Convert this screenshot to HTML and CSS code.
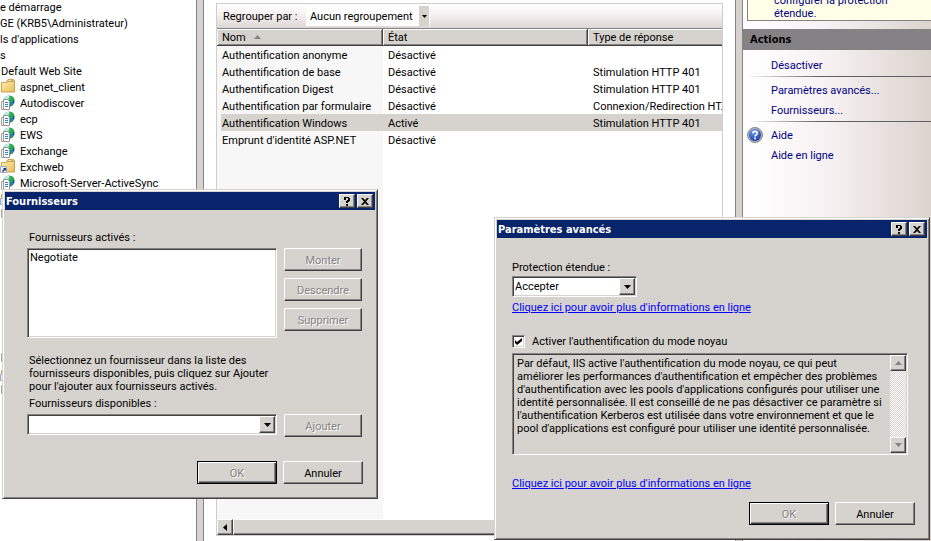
FILE: index.html
```html
<!DOCTYPE html>
<html lang="fr">
<head>
<meta charset="utf-8">
<title>Authentification</title>
<link rel="stylesheet" href="styles.css">
</head>
<body>
<svg class="defs" aria-hidden="true">
  <defs>
    <linearGradient id="gFolder" x1="0" y1="0" x2="1" y2="1"><stop offset="0" stop-color="#fff0b0"/><stop offset="1" stop-color="#e8bc58"/></linearGradient>
    <radialGradient id="gGlobe" cx=".35" cy=".3" r=".8"><stop offset="0" stop-color="#9fe0ff"/><stop offset=".5" stop-color="#2a86e0"/><stop offset="1" stop-color="#0a3a9c"/></radialGradient>
    <radialGradient id="gHelp" cx=".4" cy=".25" r=".8"><stop offset="0" stop-color="#6f9cf0"/><stop offset="1" stop-color="#1438a8"/></radialGradient>
  </defs>
  <symbol id="folder" viewBox="0 0 16 16">
    <path d="M7 1.500 8 .5h5.500l1 1V12H6z" fill="#e9bd5c" stroke="#c79a3c" stroke-width=".8"/>
    <path d="M8.500 1.500h4v1h-4z" fill="#fff"/><path d="M11 1.500h2v1h-2z" fill="#48a8d8"/>
    <path d="M1.500 3.500h5.500l1-1h6.500v10.500h-13z" fill="url(#gFolder)" stroke="#c99d45" stroke-width=".9"/>
  </symbol>
  <symbol id="app" viewBox="0 0 16 16">
    <circle cx="9" cy="6" r="5.600" fill="url(#gGlobe)"/>
    <path d="M4.500 3C6 1 8.500.5 9.500 1L8.500 3 6.500 4 5 6.500 3.800 5z" fill="#c5efd0"/>
    <path d="M9.500.700c2 0 4 1.500 4.700 3.300L13 5l-1 2.500-2-1L9 4l1.500-1z" fill="#28b428"/>
    <path d="M10.500 8.500 13 8l-1.500 3-1 .5z" fill="#34a843"/>
    <path d="M1.500 6.500h5v8h-5z" fill="#fff" stroke="#999" stroke-width=".9"/>
    <path d="M3.500 4.500h4l2 2v8h-6z" fill="#fff" stroke="#888" stroke-width=".9"/>
    <path d="M5 7.500h3M5 9.500h3M5 11.500h3" stroke="#3b7fd0"/>
  </symbol>
  <symbol id="vdir" viewBox="0 0 16 16">
    <use href="#folder"/>
    <path d="M.5 7.500h6v6h-6z" fill="#eef1fb" stroke="#a0a8c0"/>
    <path d="M3 9h3v3L5 11l-2 2-1-1 2-2z" fill="#203080"/>
  </symbol>
  <symbol id="page" viewBox="0 0 16 16"><path d="M1 2h13v9H1z" fill="#aaa"/></symbol>
</svg>

<main class="console">
  <nav class="tree" aria-label="Connexions">
    <ul>
      <li>e démarrage</li>
      <li>GE (KRB5\Administrateur)</li>
      <li>ls d'applications</li>
      <li>s</li>
      <li class="site">Default Web Site</li>
      <li class="leaf"><svg><use href="#folder"/></svg>aspnet_client</li>
      <li class="leaf"><svg><use href="#app"/></svg>Autodiscover</li>
      <li class="leaf"><svg><use href="#app"/></svg>ecp</li>
      <li class="leaf"><svg><use href="#app"/></svg>EWS</li>
      <li class="leaf"><svg><use href="#app"/></svg>Exchange</li>
      <li class="leaf"><svg><use href="#vdir"/></svg>Exchweb</li>
      <li class="leaf"><svg><use href="#app"/></svg>Microsoft-Server-ActiveSync</li>
      <li class="leaf"><svg><use href="#vdir"/></svg></li>
      <li class="leaf"><svg><use href="#page"/></svg></li>
      <li></li><li></li><li></li><li></li><li></li><li></li><li></li><li></li>
      <li class="leaf"><svg><use href="#page"/></svg></li>
      <li class="leaf"><svg><use href="#vdir"/></svg></li>
      <li class="leaf"><svg><use href="#page"/></svg></li>
    </ul>
  </nav>
  <div class="splitter"></div>

  <section class="center">
    <div class="list">
      <div class="toolbar">
        <label for="group">Regrouper par :</label>
        <span class="flat-combo">
          <select id="group"><option>Aucun regroupement</option></select>
          <span class="arrow"><svg viewBox="0 0 5 3"><path d="M0 0h5L2.500 3z"/></svg></span>
        </span>
      </div>
      <div class="rows">
        <table>
          <colgroup><col class="c-name"><col class="c-state"><col></colgroup>
          <thead><tr>
            <th>Nom <svg class="sort" viewBox="0 0 7 4"><path d="M0 4h7L3.500 0z"/></svg></th>
            <th>État</th><th>Type de réponse</th>
          </tr></thead>
          <tbody>
            <tr><td>Authentification anonyme</td><td>Désactivé</td><td></td></tr>
            <tr><td>Authentification de base</td><td>Désactivé</td><td>Stimulation HTTP 401</td></tr>
            <tr><td>Authentification Digest</td><td>Désactivé</td><td>Stimulation HTTP 401</td></tr>
            <tr><td>Authentification par formulaire</td><td>Désactivé</td><td>Connexion/Redirection HT.</td></tr>
            <tr class="selected"><td>Authentification Windows</td><td>Activé</td><td>Stimulation HTTP 401</td></tr>
            <tr><td>Emprunt d'identité ASP.NET</td><td>Désactivé</td><td></td></tr>
          </tbody>
        </table>
      </div>
      <div class="hscroll">
        <button type="button" aria-label="Défiler à gauche"><svg viewBox="0 0 4 7"><path d="M4 0v7L0 3.500z"/></svg></button>
        <div class="thumb"></div>
      </div>
    </div>
  </section>
  <div class="splitter"></div>

  <aside class="actions">
    <div class="note">configurer la protection étendue.</div>
    <h2>Actions</h2>
    <ul>
      <li><a href="#">Désactiver</a></li>
      <li class="rule"></li>
      <li><a href="#">Paramètres avancés...</a></li>
      <li><a href="#">Fournisseurs...</a></li>
      <li class="rule"></li>
      <li><svg class="help" viewBox="0 0 16 16"><circle cx="8" cy="8" r="7.500" fill="#b4b4b8" stroke="#88888c"/><circle cx="8" cy="8" r="6" fill="url(#gHelp)"/><path d="M5.800 6.200C5.800 3.500 10.500 3.700 10.300 6.200 10.200 7.800 8.100 7.700 8.100 9.500" fill="none" stroke="#fff" stroke-width="1.700"/><path d="M7.200 10.600h1.800v1.700H7.200z" fill="#fff"/></svg><a href="#">Aide</a></li>
      <li><a href="#">Aide en ligne</a></li>
    </ul>
  </aside>
</main>

<section class="dialog providers" role="dialog" aria-labelledby="t1">
  <header>
    <h1 id="t1">Fournisseurs</h1>
    <button type="button" aria-label="Aide"><svg viewBox="0 0 8 9"><path d="M1 0h5v1h1v3H6v1H5v1H3V4h1V3h1V1H3v2H1zM3 7h2v2H3z"/></svg></button>
    <button type="button" aria-label="Fermer"><svg viewBox="0 0 8 9"><path d="M0 1h2l2 2 2-2h2L5 4.500 8 8H6L4 6 2 8H0l3-3.500z"/></svg></button>
  </header>
  <form>
    <label for="active">Fournisseurs activés :</label>
    <div class="pair">
      <select id="active" class="listbox" size="5"><option>Negotiate</option></select>
      <div class="stack">
        <button type="button" disabled>Monter</button>
        <button type="button" disabled>Descendre</button>
        <button type="button" disabled>Supprimer</button>
      </div>
    </div>
    <p>Sélectionnez un fournisseur dans la liste des<br>fournisseurs disponibles, puis cliquez sur Ajouter<br>pour l'ajouter aux fournisseurs activés.</p>
    <label for="avail">Fournisseurs disponibles :</label>
    <div class="pair">
      <span class="combo"><select id="avail"><option></option></select><span class="arrow"><svg viewBox="0 0 7 4"><path d="M0 0h7L3.500 4z"/></svg></span></span>
      <div class="stack"><button type="button" disabled>Ajouter</button></div>
    </div>
    <footer><button type="button" class="default" disabled>OK</button><button type="button">Annuler</button></footer>
  </form>
</section>

<section class="dialog advanced" role="dialog" aria-labelledby="t2">
  <header>
    <h1 id="t2">Paramètres avancés</h1>
    <button type="button" aria-label="Aide"><svg viewBox="0 0 8 9"><path d="M1 0h5v1h1v3H6v1H5v1H3V4h1V3h1V1H3v2H1zM3 7h2v2H3z"/></svg></button>
    <button type="button" aria-label="Fermer"><svg viewBox="0 0 8 9"><path d="M0 1h2l2 2 2-2h2L5 4.500 8 8H6L4 6 2 8H0l3-3.500z"/></svg></button>
  </header>
  <form>
    <label for="prot">Protection étendue :</label>
    <span class="combo short"><select id="prot"><option>Accepter</option></select><span class="arrow"><svg viewBox="0 0 7 4"><path d="M0 0h7L3.500 4z"/></svg></span></span>
    <a class="more" href="#">Cliquez ici pour avoir plus d'informations en ligne</a>
    <div class="check"><input type="checkbox" id="kernel" checked><label for="kernel">Activer l'authentification du mode noyau</label></div>
    <div class="memo">
      <textarea readonly aria-label="Description">Par défaut, IIS active l'authentification du mode noyau, ce qui peut
améliorer les performances d'authentification et empêcher des problèmes
d'authentification avec les pools d'applications configurés pour utiliser une
identité personnalisée. Il est conseillé de ne pas désactiver ce paramètre si
l'authentification Kerberos est utilisée dans votre environnement et que le
pool d'applications est configuré pour utiliser une identité personnalisée.</textarea>
      <div class="vscroll">
        <button type="button" disabled aria-label="Monter"><svg viewBox="0 0 7 4"><path d="M0 4h7L3.500 0z"/></svg></button>
        <button type="button" disabled aria-label="Descendre"><svg viewBox="0 0 7 4"><path d="M0 0h7L3.500 4z"/></svg></button>
      </div>
    </div>
    <a class="more" href="#">Cliquez ici pour avoir plus d'informations en ligne</a>
    <footer><button type="button" class="default" disabled>OK</button><button type="button">Annuler</button></footer>
  </form>
</section>
</body>
</html>
```
FILE: styles.css
```css
:root {
  --face: #d6d3ce;
  --shade: #848284;
  --dark: #424142;
  --navy: #08246b;
}
* { box-sizing: border-box; }
body {
  margin: 0;
  background: #fff;
  color: #000;
  overflow: hidden;
}
body, button, select, input, textarea {
  font: 11px/13px Roboto, "Noto Sans", sans-serif;
}
ul { list-style: none; margin: 0; padding: 0; }
h1, h2, p { margin: 0; font-size: 11px; }
h1, h2 { font-family: "DejaVu Sans Condensed", "Noto Sans", sans-serif; }
svg { display: block; flex: none; }
.defs { position: absolute; width: 0; height: 0; }

.console {
  display: grid;
  grid-template-columns: 196px 8px minmax(0, 1fr) 8px 188px;
  height: 100vh;
}
.splitter {
  background: var(--face);
  border: solid var(--shade);
  border-width: 0 1px;
}

/* Tree */
.tree { overflow: hidden; white-space: nowrap; }
.tree ul { margin-top: -1px; }
.tree li { height: 16px; line-height: 17px; }
.tree .site { padding-left: 1px; }
.tree .leaf { display: flex; gap: 4px; }
.tree svg { width: 16px; height: 16px; }

/* Feature list */
.center { padding: 3px 12px 5px; min-width: 0; }
.list {
  display: flex;
  flex-direction: column;
  height: 100%;
  border: 1px solid #d0cdcc;
}
.toolbar {
  display: flex;
  align-items: center;
  gap: 6px;
  flex: none;
  height: 25px;
  padding-left: 6px;
  border-bottom: 1px solid var(--shade);
  background: linear-gradient(#fff, #f5eff1 45%, #dcd6d3);
}
.toolbar label { width: 77px; white-space: nowrap; }
.flat-combo { position: relative; width: 124px; height: 20px; }
.flat-combo select {
  appearance: none;
  width: 100%;
  height: 100%;
  padding: 0 0 0 4px;
  border: 0;
  border-radius: 0;
  background: #fff;
}
.flat-combo .arrow {
  position: absolute;
  inset: 0 1px 0 auto;
  width: 10px;
  display: grid;
  place-items: center;
  background: var(--face);
  pointer-events: none;
}
.flat-combo svg { width: 5px; height: 3px; }
.rows {
  flex: 1;
  min-height: 0;
  overflow: hidden;
  background: linear-gradient(to right, #f7f7f7 166px, #fff 166px);
}
table { width: 100%; table-layout: fixed; border-collapse: separate; border-spacing: 0; }
.c-name { width: 166px; }
.c-state { width: 205px; }
th, td {
  height: 17px;
  padding: 1px 0 0 5px;
  text-align: left;
  font-weight: normal;
  white-space: nowrap;
  overflow: hidden;
}
th {
  background: var(--face);
  border-right: 1px solid var(--dark);
  border-bottom: 1px solid var(--dark);
  box-shadow: inset 1px 1px #fff, inset -1px -1px var(--shade);
}
th:last-child { border-right: 0; box-shadow: inset 1px 1px #fff, inset 0 -1px var(--shade); }
.sort { display: inline-block; width: 7px; height: 4px; margin: 0 0 2px 5px; fill: var(--shade); }
.selected td { background: var(--face); }
.selected td:first-child { background: linear-gradient(to right, transparent 4px, var(--face) 4px); }
.hscroll { display: flex; height: 16px; flex: none; }
.hscroll button, .hscroll .thumb, .vscroll button, .combo .arrow, .dialog header button {
  display: grid;
  place-items: center;
  padding: 0;
  border: 1px solid;
  border-color: #fff var(--dark) var(--dark) #fff;
  box-shadow: inset -1px -1px var(--shade);
  background: var(--face);
}
.hscroll button { width: 16px; }
.hscroll svg { width: 4px; height: 7px; }
.hscroll .thumb { flex: 1; }

/* Actions */
.actions {
  overflow: hidden;
  background: linear-gradient(to right, #fff, #f7f1f3 45%, #dbd4ce);
}
.note {
  display: flex;
  align-items: flex-end;
  height: 21px;
  margin-left: 4px;
  padding: 0 24px 0 26px;
  border: solid var(--shade);
  border-width: 0 0 1px 1px;
  background: #ffffe7;
  color: #000084;
}
.actions h2 {
  height: 21px;
  margin-top: 8px;
  padding-left: 7px;
  line-height: 22px;
  background: var(--shade);
}
.actions ul { padding: 5px 0 0 4px; }
.actions li { display: flex; align-items: center; height: 20px; padding-left: 24px; }
.actions .rule {
  height: 1px;
  margin: 1px 0 3px;
  padding: 0;
  background: linear-gradient(to right, transparent, #636163 40%);
}
.actions a { color: #000084; text-decoration: none; }
.help { width: 16px; height: 16px; margin: 0 8px 0 -24px; }

/* Dialogs */
.dialog {
  position: absolute;
  padding: 2px;
  border: 1px solid;
  border-color: var(--face) var(--dark) var(--dark) var(--face);
  box-shadow: inset 1px 1px #fff, inset -1px -1px var(--shade);
  background: var(--face);
}
.providers { left: 2px; top: 189px; width: 376px; }
.advanced { left: 494px; top: 217px; width: 436px; }
.dialog header {
  display: flex;
  align-items: center;
  gap: 2px;
  height: 18px;
  padding: 0 2px 0 1px;
  background: var(--navy);
  color: #fff;
}
.dialog h1 { flex: 1; }
.dialog header button { width: 16px; height: 14px; }
.dialog header svg { width: 8px; height: 9px; }
.dialog form { display: flex; flex-direction: column; }
.providers form { padding: 21px 12px 12px 22px; }
.advanced form { padding: 23px 12px 12px 15px; }
.providers form > label, .providers p { padding-left: 2px; }
.pair { display: flex; gap: 7px; }
.providers label + .pair { margin-top: 4px; }
.stack { display: flex; flex-direction: column; gap: 7px; width: 78px; }
.stack button, footer button {
  height: 23px;
  padding: 1px 0 0;
  border: 1px solid;
  border-color: #fff var(--dark) var(--dark) #fff;
  box-shadow: inset -1px -1px var(--shade);
  background: var(--face);
  color: #000;
}
.dialog button:disabled { color: var(--shade); text-shadow: 1px 1px #fff; }
footer { display: flex; justify-content: flex-end; gap: 6px; }
footer button { width: 80px; }
footer .default {
  border-color: #000;
  box-shadow: inset 1px 1px #fff, inset -1px -1px var(--dark), inset -2px -2px var(--shade);
}
.listbox, .combo, .memo {
  border: 1px solid;
  border-color: var(--shade) #fff #fff var(--shade);
  box-shadow: inset 1px 1px var(--dark), inset -1px -1px var(--face);
  border-radius: 0;
}
.listbox {
  appearance: none;
  width: 250px;
  height: 90px;
  padding: 2px 1px;
  overflow: hidden;
  background: #fff;
  outline: 0;
}
.listbox option { min-height: 0; padding: 0 1px; }
.providers p { margin: 16px 0 4px; }
.combo {
  position: relative;
  width: 250px;
  height: 21px;
  padding: 1px;
  background: #fff;
}
.combo select {
  display: block;
  appearance: none;
  width: 100%;
  height: 100%;
  padding: 0 0 0 1px;
  border: 0;
  background: transparent;
}
.combo .arrow {
  position: absolute;
  inset: 1px 1px 1px auto;
  width: 16px;
  pointer-events: none;
}
.combo svg { width: 7px; height: 4px; }
.providers footer { margin-top: 24px; }

.combo.short { width: 125px; margin: 2px 0 4px; }
.more { align-self: flex-start; color: #00f; }
.check { display: flex; align-items: center; gap: 7px; margin: 21px 0 5px; }
.check input {
  appearance: none;
  width: 13px;
  height: 13px;
  margin: 0;
  border: 1px solid;
  border-color: var(--shade) #fff #fff var(--shade);
  box-shadow: inset 1px 1px var(--dark), inset -1px -1px var(--face);
  background: #fff;
}
.check input:checked::before {
  content: "";
  display: block;
  width: 7px;
  height: 7px;
  margin: 2px;
  background: #000;
  clip-path: polygon(0 29%, 29% 57%, 100% 0, 100% 43%, 29% 100%, 0 71%);
}
.memo { display: flex; width: 396px; height: 102px; padding: 1px; margin-bottom: 22px; }
.memo textarea {
  flex: 1;
  min-width: 0;
  padding: 2px 0 0 3px;
  border: 0;
  background: transparent;
  resize: none;
  overflow: hidden;
  white-space: pre;
  outline: 0;
}
.vscroll {
  display: flex;
  flex-direction: column;
  justify-content: space-between;
  width: 16px;
  background: repeating-conic-gradient(#fff 0 25%, var(--face) 0 50%) 0 0 / 2px 2px;
}
.vscroll button { height: 16px; }
.vscroll svg { width: 7px; height: 4px; fill: var(--shade); }
.advanced footer { margin-top: 12px; }
```
